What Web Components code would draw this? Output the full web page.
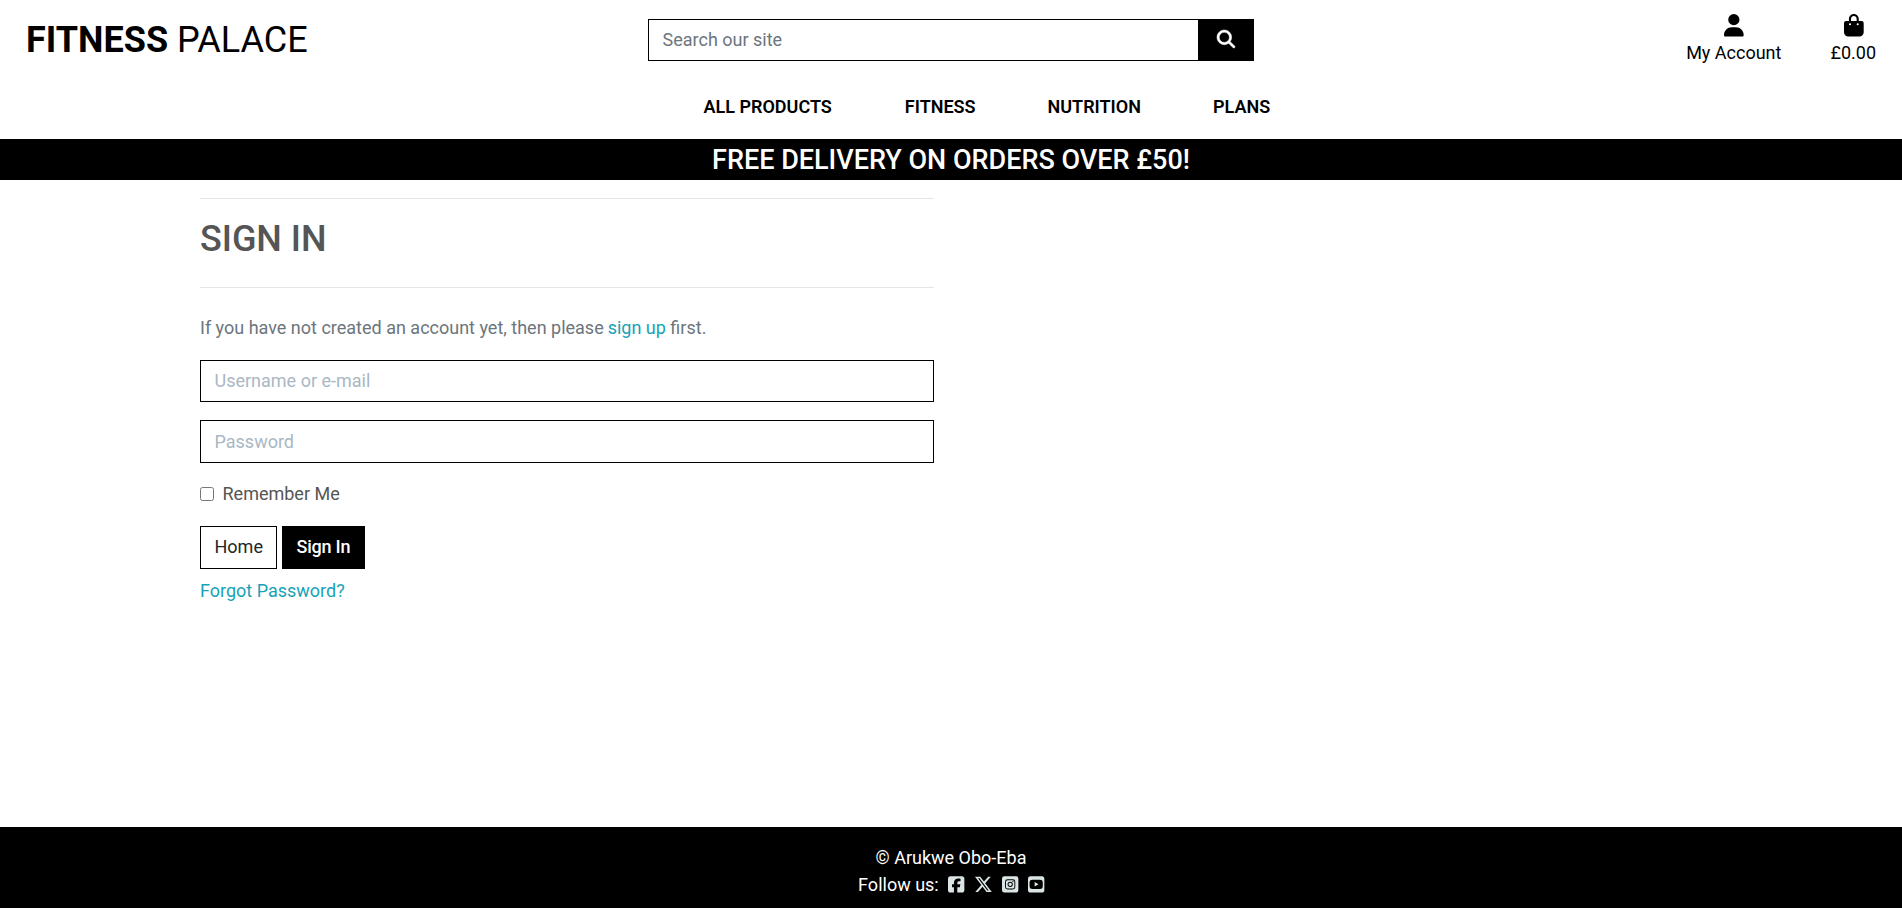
<!DOCTYPE html>
<html lang="en">
<head>
<meta charset="utf-8">
<title>Fitness Palace</title>
<style>
html{font-size:18px}
body{margin:0;background:#fff;color:#000;font-family:Roboto,"Liberation Sans",sans-serif;font-size:18px;line-height:1.5}
</style>
</head>
<body>
<fp-page>
  <fp-header slot="header"></fp-header>
  <fp-banner slot="header">FREE DELIVERY ON ORDERS OVER £50!</fp-banner>
  <fp-sign-in></fp-sign-in>
  <fp-footer slot="footer"></fp-footer>
</fp-page>
<script>
const define = (name, html) => customElements.define(name, class extends HTMLElement {
  constructor() {
    super();
    const t = document.createElement('template');
    t.innerHTML = html;
    this.attachShadow({mode: 'open'}).append(t.content.cloneNode(true));
  }
});

const ICONS = {
  user: [448, 'M224 256A128 128 0 1 0 224 0a128 128 0 1 0 0 256zm-45.7 48C79.8 304 0 383.8 0 482.3C0 498.7 13.3 512 29.7 512H418.3c16.4 0 29.7-13.3 29.7-29.7C448 383.8 368.2 304 269.7 304H178.3z'],
  bag: [448, 'M160 112c0-35.3 28.7-64 64-64s64 28.7 64 64v48H160V112zm-48 48H48c-26.5 0-48 21.5-48 48V416c0 53 43 96 96 96H352c53 0 96-43 96-96V208c0-26.5-21.5-48-48-48H336V112C336 50.1 285.9 0 224 0S112 50.1 112 112v48zm24 48a24 24 0 1 1 0 48 24 24 0 1 1 0-48zm152 24a24 24 0 1 1 48 0 24 24 0 1 1 -48 0z'],
  search: [512, 'M416 208c0 45.9-14.9 88.3-40 122.7L502.6 457.4c12.5 12.5 12.5 32.8 0 45.3s-32.8 12.5-45.3 0L330.7 376c-34.4 25.2-76.8 40-122.7 40C93.1 416 0 322.9 0 208S93.1 0 208 0S416 93.1 416 208zM208 352a144 144 0 1 0 0-288 144 144 0 1 0 0 288z'],
  facebook: [448, 'M64 32C28.7 32 0 60.7 0 96V416c0 35.3 28.7 64 64 64h98.2V334.2H109.4V256h52.8V222.3c0-87.1 39.4-127.5 125-127.5c16.2 0 44.2 3.2 55.7 6.4V172c-6-.6-16.5-1-29.6-1c-42 0-58.2 15.9-58.2 57.2V256h83.6l-14.4 78.2H255V480H384c35.3 0 64-28.7 64-64V96c0-35.3-28.7-64-64-64H64z'],
  x: [512, 'M389.2 48h70.6L305.6 224.2 487 464H345L233.7 318.6 106.5 464H35.8L200.7 275.5 26.8 48H172.4L272.9 180.9 389.2 48zM364.4 421.8h39.1L151.1 88h-42L364.4 421.8z'],
  instagram: [448, 'M64 32H384a64 64 0 0 1 64 64V416a64 64 0 0 1-64 64H64a64 64 0 0 1-64-64V96a64 64 0 0 1 64-64zM150 116H298a66 66 0 0 1 66 66V330a66 66 0 0 1-66 66H150a66 66 0 0 1-66-66V182a66 66 0 0 1 66-66zM154 141a45 45 0 0 0-45 45V326a45 45 0 0 0 45 45H294a45 45 0 0 0 45-45V186a45 45 0 0 0-45-45zM224 184a72 72 0 1 0 0 144 72 72 0 1 0 0-144zM224 209a47 47 0 1 1 0 94 47 47 0 1 1 0-94zM299 164a17 17 0 1 0 0 34 17 17 0 1 0 0-34z'],
  youtube: [448, 'M290 256.2l-108-62V318.3L290 256.2zM384 32H64C28.7 32 0 60.7 0 96V416c0 35.3 28.7 64 64 64H384c35.3 0 64-28.7 64-64V96c0-35.3-28.7-64-64-64zm14.4 136.1c7.6 28.6 7.6 88.2 7.6 88.2s0 59.6-7.6 88.1c-4.2 15.8-16.5 27.7-32.2 31.9C337.9 384 224 384 224 384s-113.9 0-142.2-7.6c-15.7-4.2-28-16.1-32.2-31.9C42 315.9 42 256.3 42 256.3s0-59.7 7.6-88.2c4.2-15.8 16.5-28.2 32.2-32.4C110.1 128 224 128 224 128s113.9 0 142.2 7.7c15.7 4.2 28 16.6 32.2 32.4z']
};
customElements.define('fp-icon', class extends HTMLElement {
  connectedCallback() {
    if (this.shadowRoot) return;
    const [w, d] = ICONS[this.getAttribute('name')];
    this.attachShadow({mode: 'open'}).innerHTML =
      `<style>:host{display:block;height:1em;line-height:0}svg{display:block;height:1em;width:${w / 512}em;fill:currentColor;stroke:currentColor;stroke-width:var(--icon-stroke,0);overflow:visible}</style>
       <svg viewBox="0 0 ${w} 512" aria-hidden="true"><path fill-rule="evenodd" d="${d}"/></svg>`;
  }
});

define('fp-page', `<style>
:host{display:flex;flex-direction:column;min-height:100vh}
main{flex:1;padding:0 200px}
</style><slot name="header"></slot><main><slot></slot></main><slot name="footer"></slot>`);

define('fp-search', `<style>
:host{display:flex;box-sizing:border-box;height:42px;border:1px solid #000}
input{flex:1;min-width:0;border:0;padding:0 13.5px 2px;font:inherit;outline:0;background:#fff}
input::placeholder{color:#6c757d;opacity:1}
button{width:55px;border:0;padding:0 0 3px 1px;background:#000;color:#fff;font-size:18px;display:flex;align-items:center;justify-content:center}
fp-icon{--icon-stroke:14}
</style><input type="text" placeholder="Search our site"><button aria-label="Search"><fp-icon name="search"></fp-icon></button>`);

define('fp-tool', `<style>
:host{display:flex;flex-direction:column;align-items:center}
.i{font-size:22.5px;padding-left:1px}
span{line-height:27px;margin-top:2px}
</style><div class="i"><slot name="icon"></slot></div><span><slot></slot></span>`);

define('fp-header', `<style>
:host{display:block;height:139px}
.top{display:grid;grid-template-columns:1fr 606px 1fr;align-items:start;padding:0 26px;height:66px}
.logo{font-size:36px;line-height:43px;padding-top:19px}
fp-search{margin-top:19px}
.tools{display:flex;justify-content:flex-end;gap:49px;padding-top:14px}
nav{display:flex;gap:72px;padding:27px 0 0 703.5px;font-weight:600;line-height:27px}
nav span:first-child{margin-right:1px}
.logo b{font-weight:700}
</style>
<div class="top"><div class="logo"><b>FITNESS</b> PALACE</div><fp-search></fp-search>
<div class="tools"><fp-tool><fp-icon slot="icon" name="user"></fp-icon>My Account</fp-tool><fp-tool><fp-icon slot="icon" name="bag"></fp-icon>£0.00</fp-tool></div></div>
<nav><span>ALL PRODUCTS</span><span>FITNESS</span><span>NUTRITION</span><span>PLANS</span></nav>`);

define('fp-banner', `<style>
:host{display:block;box-sizing:border-box;height:41px;padding-top:1px;line-height:40.5px;background:#000;color:#fff;text-align:center;font-size:27px;font-weight:500}
</style><slot></slot>`);

define('fp-field', `<style>
:host{display:block;height:42px;margin-bottom:18px}
input{display:block;box-sizing:border-box;width:100%;height:100%;border:1px solid #000;padding:0 13.5px 1px;font:inherit;outline:0;border-radius:0}
input::placeholder{color:#aab7c4;opacity:1}
</style><input>`);

define('fp-button', `<style>
:host{display:block;box-sizing:border-box;height:43px;line-height:27px;padding:6px 13.5px;border:1px solid #000;color:#212529}
:host([primary]){padding:6px 13.5px 6px 13px;background:#000;color:#fff;font-weight:500;letter-spacing:-.2px}
</style><slot></slot>`);

define('fp-sign-in', `<style>
:host{display:block;width:734px;color:#555}
hr{border:0;height:1px;background:rgba(0,0,0,.1);margin:18px 0}
h2{font-size:36px;line-height:43px;font-weight:500;margin:0;padding:1px 0 8px;letter-spacing:-.05px}
p{margin:26px 0 19px;color:#6c757d}
p .link{margin-left:-.5px}
.link{color:#17a2b8}
fp-field + fp-field{height:43px}
label{display:flex;align-items:center;height:27px;margin:-1px 0 19px}
label input{width:14px;height:14px;margin:0 8.5px 0 0}
.row{display:flex;gap:5px;margin-bottom:8px}
</style>
<hr><h2>SIGN IN</h2><hr>
<p>If you have not created an account yet, then please <span class="link">sign up</span> first.</p>
<fp-field data-hint="Username or e-mail"></fp-field><fp-field data-hint="Password"></fp-field>
<label><input type="checkbox">Remember Me</label>
<div class="row"><fp-button>Home</fp-button><fp-button primary>Sign In</fp-button></div>
<div class="link">Forgot Password?</div>`);
document.querySelector('fp-sign-in').shadowRoot.querySelectorAll('fp-field').forEach(f =>
  f.shadowRoot.querySelector('input').placeholder = f.dataset.hint);

define('fp-footer', `<style>
:host{display:flex;flex-direction:column;align-items:center;box-sizing:border-box;height:81px;padding-top:17px;background:#000;color:#fff;line-height:27px}
.row{display:flex;align-items:center;padding-left:.5px}
.icons{display:flex;margin-left:9.5px;color:#dce5e5;font-size:18.7px}
fp-icon{margin-right:9.7px}
fp-icon[name=x]{margin-right:9px}
fp-icon:last-child{margin-right:0}
</style><div>© Arukwe Obo-Eba</div>
<div class="row"><span>Follow us:</span><div class="icons"><fp-icon name="facebook"></fp-icon><fp-icon name="x"></fp-icon><fp-icon name="instagram"></fp-icon><fp-icon name="youtube"></fp-icon></div></div>`);
</script>
</body>
</html>
